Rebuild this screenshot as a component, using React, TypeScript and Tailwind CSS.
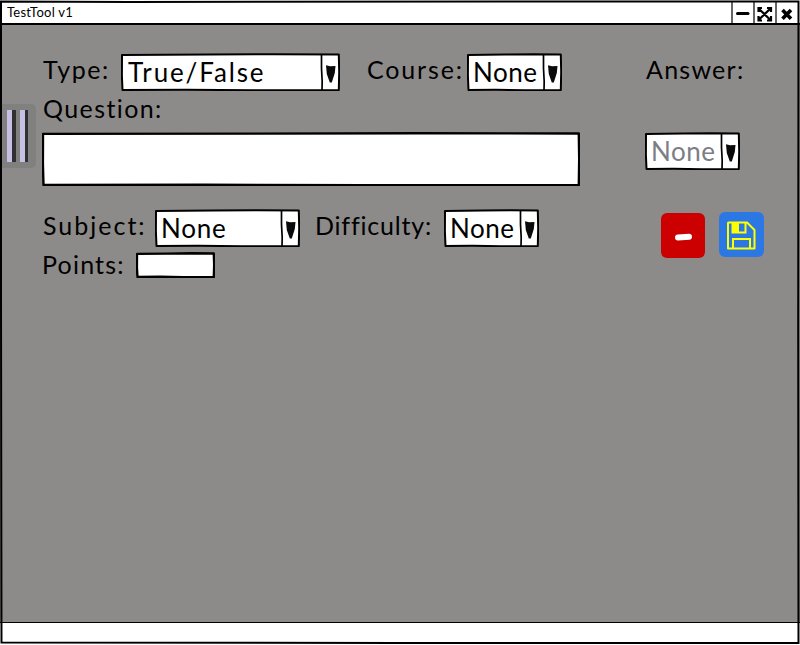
import React from "react";

const FONT = "font-['Lato','Liberation_Sans',sans-serif] whitespace-nowrap";

function Outline({ w, h, split, thick = 2 }: { w: number; h: number; split?: number; thick?: number }) {
  return (
    <svg className="absolute inset-0" width={w} height={h} viewBox={`0 0 ${w} ${h}`} fill="none" stroke="#000" strokeLinejoin="round">
      <path
        d={`M1 1.9 L${w * 0.4} 1.6 L${w * 0.7} 1.2 L${w - 1.2} 1.5 L${w - 0.8} ${h * 0.5} L${w - 1.2} ${h - 0.9} L${w * 0.6} ${h - 0.8} L${w * 0.3} ${h - 1.2} L1.5 ${h - 1} L.9 ${h * 0.6} Z`}
        fill="#fff"
        strokeWidth={thick}
      />
      {split !== undefined && (
        <>
          <path d={`M${split - 0.5} 1 L${split - 0.5} ${h * 0.4} L${split + 0.2} ${h * 0.75} L${split} ${h - 1}`} strokeWidth="1.7" />
          <path
            d={`M${split + 4} 12.2 L${split + 8} 13.2 L${split + 13.5} 13 L${split + 12.8} 20 L${split + 9.8} 29.500 L${split + 7.8} 29.500 L${split + 4.800} 21 Z`}
            fill="#0a0a0a"
            stroke="none"
          />
        </>
      )}
    </svg>
  );
}

function Select({ w, value, tracking, muted, pad }: { w: number; value: string; tracking: string; muted?: boolean; pad: string }) {
  return (
    <button className="relative h-[38px] shrink-0 text-left" style={{ width: w }}>
      <Outline w={w} h={38} split={w - 18} />
      <span className={`relative block text-[26px] leading-[36px] ${FONT} ${tracking} ${pad} ${muted ? "text-[#7d7d86]" : "text-black"}`}>{value}</span>
    </button>
  );
}

function Label({ children, cls }: { children: string; cls: string }) {
  return <span className={`block shrink-0 text-[25px] leading-[32px] text-black ${FONT} ${cls}`}>{children}</span>;
}

export default function App() {
  return (
    <div className="relative flex h-[645px] w-[800px] flex-col overflow-hidden bg-[#8d8b89]">
      <header className="flex h-[25px] shrink-0 items-stretch border-b-2 border-black bg-white pt-[2px] pl-[7px]">
        <span className={`grow text-[13px] leading-[21px] tracking-[0.25px] text-black ${FONT}`}>TestTool v1</span>
        <div className="flex w-[22px] border-l-2 border-[#666]">
          <svg width="20" height="21" viewBox="0 0 20 21"><path d="M4.500 11.500H15" stroke="#000" strokeWidth="3" strokeLinecap="round" /></svg>
        </div>
        <div className="flex w-[22px] border-l-2 border-[#666]">
          <svg width="20" height="21" viewBox="0 0 20 21" fill="none" stroke="#000" strokeWidth="2.2">
            <path d="M3.500 6.500L15.500 18M15.500 6.500L3.500 18M3.500 10V6H7M12 6H16V10M3.500 14V18.500H7M12 18.500H16V14" />
          </svg>
        </div>
        <div className="flex w-[25px] border-l-2 border-[#666]">
          <svg width="20" height="21" viewBox="0 0 20 21"><path d="M5.500 8L14 16.800M14 8L5.500 16.800" stroke="#000" strokeWidth="3.600" /></svg>
        </div>
      </header>

      <main className="flex grow">
        <aside className="mt-[79px] flex h-[64px] w-[36px] shrink-0 rounded-r-[5px] bg-[#80807f] pt-[6px] pl-[7px]">
          <i className="h-[52px] w-[5px] bg-[#c8bfe7]" />
          <i className="h-[52px] w-[4px] bg-[#303030]" />
          <i className="ml-[4px] h-[52px] w-[5px] bg-[#c8bfe7]" />
          <i className="h-[52px] w-[3px] bg-[#303030]" />
        </aside>

        <section className="ml-[6px] flex w-[603px] shrink-0 flex-col pt-[28px]">
          <div className="flex h-[39px] items-start">
            <Label cls="w-[79px] pl-[1px] tracking-[1.6px]">Type:</Label>
            <Select w={219} value="True/False" tracking="tracking-[1.85px]" pad="pl-[7px]" />
            <Label cls="ml-[26px] w-[101px] pl-[1px] tracking-[1.85px]">Course:</Label>
            <Select w={95} value="None" tracking="tracking-[0.5px]" pad="pl-[6px]" />
          </div>
          <Label cls="h-[40px] pl-[1px] tracking-[1.4px]">Question:</Label>
          <div className="relative h-[54px] w-[538px]">
            <Outline w={538} h={54} thick={2.4} />
          </div>
          <div className="mt-[23px] flex h-[39px] items-start">
            <Label cls="w-[113px] pl-[1px] tracking-[2px]">Subject:</Label>
            <Select w={145} value="None" tracking="tracking-[0.8px]" pad="pl-[6px]" />
            <Label cls="ml-[15px] w-[129px] tracking-[0.8px]">Difficulty:</Label>
            <Select w={95} value="None" tracking="tracking-[0.5px]" pad="pl-[6px]" />
          </div>
          <div className="flex items-start">
            <Label cls="w-[94px] tracking-[1.2px]">Points:</Label>
            <div className="relative mt-[4px] h-[26px] w-[79px]">
              <Outline w={79} h={26} thick={2.4} />
            </div>
          </div>
        </section>

        <section className="flex flex-col pt-[28px]">
          <Label cls="h-[79px] pl-[1px] tracking-[1.25px]">Answer:</Label>
          <Select w={95} value="None" tracking="tracking-[0.5px]" muted pad="pl-[6px]" />
          <div className="mt-[42px] flex items-start gap-[14px] pl-[16px]">
            <button className="mt-px h-[45px] w-[44px] rounded-[6px] bg-[#cc0000]">
              <svg width="44" height="45"><path d="M17 24.500L28 23.700" stroke="#fff" strokeWidth="6" strokeLinecap="round" /></svg>
            </button>
            <button className="h-[45px] w-[45px] rounded-[6px] bg-[#2b78e4]">
              <svg width="45" height="45" viewBox="0 0 45 45" fill="none" stroke="#ff0" strokeWidth="2">
                <path d="M9.500 10.500H28L35.500 18V36.500H9V11Z" strokeLinejoin="round" />
                <path d="M13.500 11V20.500H26.500V11M14 36V27H31V36" />
                <path d="M14 11H20V20H14Z" fill="#ff0" stroke="none" />
              </svg>
            </button>
          </div>
        </section>
      </main>

      <footer className="h-[23px] shrink-0 border-t border-black bg-white" />

      <svg className="pointer-events-none absolute inset-0" width="800" height="645" fill="none" stroke="#000">
        <path d="M1 1.500L130 2L500 1.500L798.500 1.500L798.200 330L798.500 643L400 643L1.500 642.500L1 300Z" strokeWidth="2" />
      </svg>
    </div>
  );
}
